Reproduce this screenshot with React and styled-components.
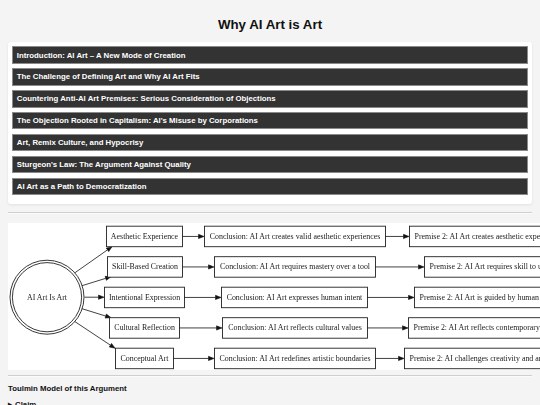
import React from "react";
import styled, { createGlobalStyle } from "styled-components";

const GlobalStyle = createGlobalStyle`
	html, body {
		margin: 0;
		padding: 0;
		overflow: hidden;
		background: #f4f4f4;
		font-family: "Liberation Sans", Arial, sans-serif;
		color: #111;
	}
`;

const Page = styled.div`
	padding: 17px 8px 0;
	width: 524px;
`;

const Title = styled.h1`
	margin: 0 0 9px;
	font-size: 13.3px;
	line-height: 16px;
	font-weight: 700;
	text-align: center;
	color: #111;
`;

const Panel = styled.div`
	background: #fff;
	border-radius: 3px;
	padding: 4.4px 4.4px 4px;
	box-shadow: 0 1px 3px rgba(0, 0, 0, 0.08);
`;

const SectionButton = styled.button`
	display: block;
	box-sizing: border-box;
	width: 100%;
	height: 17.4px;
	margin: 0 0 4.5px;
	padding: 0 3.4px;
	background: #333;
	border: 1px solid #8a8a8a;
	color: #fff;
	font-family: "Liberation Sans", Arial, sans-serif;
	font-weight: 700;
	font-size: 7.8px;
	line-height: 15px;
	text-align: left;
	cursor: pointer;
`;

const Rule = styled.hr`
	margin: ${(props) => props.$top}px 0 ${(props) => props.$bottom}px;
	height: 0;
	border: none;
	border-top: 1px solid #cfcfcf;
	border-bottom: 1px solid #fbfbfb;
`;

const DiagramWrap = styled.div`
	width: 524px;
	height: 147px;
	overflow: visible;
	will-change: transform;
`;

const SubHeading = styled.h3`
	margin: 7px 0 0;
	font-size: 7.8px;
	line-height: 9px;
	font-weight: 700;
`;

const Summary = styled.div`
	margin-top: 7px;
	font-size: 7.8px;
	line-height: 9px;
	font-weight: 700;
	display: flex;
	gap: 3px;
	align-items: center;

	span.marker {
		font-size: 5px;
	}
`;

const sections = [
	"Introduction: AI Art – A New Mode of Creation",
	"The Challenge of Defining Art and Why AI Art Fits",
	"Countering Anti-AI Art Premises: Serious Consideration of Objections",
	"The Objection Rooted in Capitalism: AI's Misuse by Corporations",
	"Art, Remix Culture, and Hypocrisy",
	"Sturgeon's Law: The Argument Against Quality",
	"AI Art as a Path to Democratization",
];

// page coords, the svg group is shifted back by the wrap offset
const rows = [
	{
		y: 236.5,
		a: [106, 182, "Aesthetic Experience"],
		b: [204, 385, "Conclusion: AI Art creates valid aesthetic experiences"],
		c: [409, "Premise 2: AI Art creates aesthetic experiences"],
		from: [75, 273],
		to: [112, 247],
	},
	{
		y: 267,
		a: [107, 182, "Skill-Based Creation"],
		b: [214, 375, "Conclusion: AI Art requires mastery over a tool"],
		c: [424, "Premise 2: AI Art requires skill to use effectively"],
		from: [82, 286],
		to: [111, 277],
	},
	{
		y: 297.5,
		a: [104, 184, "Intentional Expression"],
		b: [221, 367, "Conclusion: AI Art expresses human intent"],
		c: [414, "Premise 2: AI Art is guided by human intent"],
		from: [84.5, 297.5],
		to: [104, 297.5],
	},
	{
		y: 328,
		a: [109, 179, "Cultural Reflection"],
		b: [222, 367, "Conclusion: AI Art reflects cultural values"],
		c: [408, "Premise 2: AI Art reflects contemporary culture"],
		from: [82, 309],
		to: [111, 318],
	},
	{
		y: 358.5,
		a: [115, 173, "Conceptual Art"],
		b: [214, 375, "Conclusion: AI Art redefines artistic boundaries"],
		c: [404, "Premise 2: AI challenges creativity and artistic norms"],
		from: [75, 322],
		to: [115, 348.5],
	},
];

const Arrow = ({ from, to }) => {
	const [x1, y1] = from;
	const [x2, y2] = to;
	const dx = x2 - x1;
	const dy = y2 - y1;
	const len = Math.sqrt(dx * dx + dy * dy);
	const ux = dx / len;
	const uy = dy / len;
	const bx = x2 - ux * 5.5;
	const by = y2 - uy * 5.5;
	const px = -uy * 2.1;
	const py = ux * 2.1;
	return (
		<g>
			<line x1={x1} y1={y1} x2={bx} y2={by} stroke="#111" strokeWidth="0.8" />
			<polygon
				points={`${x2},${y2} ${bx + px},${by + py} ${bx - px},${by - py}`}
				fill="#111"
				stroke="#111"
				strokeWidth="0.6"
			/>
		</g>
	);
};

const Box = ({ x1, x2, y, label, start }) => (
	<g>
		<rect
			x={x1 + 0.5}
			y={y - 10}
			width={x2 - x1}
			height={20.5}
			fill="#fff"
			stroke="#222"
			strokeWidth="0.9"
		/>
		<text
			x={start ? x1 + 5.5 : (x1 + x2) / 2 + 0.5}
			y={y + 2.8}
			textAnchor={start ? "start" : "middle"}
			fontFamily="'Liberation Serif', 'Times New Roman', serif"
			fontSize="7.9"
			fill="#1a1a1a"
		>
			{label}
		</text>
	</g>
);

const ArgumentMap = () => (
	<svg width="620" height="147" viewBox="0 0 620 147">
		<rect x="0" y="0" width="620" height="147" fill="#fff" />
		<g transform="translate(-8,-223.3)">
			<circle cx="47" cy="297.5" r="37" fill="none" stroke="#222" strokeWidth="0.9" />
			<circle cx="47" cy="297.5" r="34.6" fill="none" stroke="#222" strokeWidth="0.9" />
			<text
				x="47"
				y="300.3"
				textAnchor="middle"
				fontFamily="'Liberation Serif', 'Times New Roman', serif"
				fontSize="7.9"
				fill="#1a1a1a"
			>
				AI Art Is Art
			</text>
			{rows.map((r) => (
				<g key={r.a[2]}>
					<Arrow from={r.from} to={r.to} />
					<Box x1={r.a[0]} x2={r.a[1]} y={r.y} label={r.a[2]} />
					<Arrow from={[r.a[1] + 0.5, r.y + 0.25]} to={[r.b[0], r.y + 0.25]} />
					<Box x1={r.b[0]} x2={r.b[1]} y={r.y} label={r.b[2]} />
					<Arrow from={[r.b[1] + 0.5, r.y + 0.25]} to={[r.c[0], r.y + 0.25]} />
					<Box x1={r.c[0]} x2={700} y={r.y} label={r.c[1]} start />
				</g>
			))}
		</g>
	</svg>
);

const App = () => {
	return (
		<Page>
			<GlobalStyle />
			<Title>Why AI Art is Art</Title>
			<Panel>
				{sections.map((s) => (
					<SectionButton key={s}>{s}</SectionButton>
				))}
			</Panel>
			<Rule $top={8} $bottom={9} />
			<DiagramWrap>
				<ArgumentMap />
			</DiagramWrap>
			<Rule $top={5.4} $bottom={0} />
			<SubHeading>Toulmin Model of this Argument</SubHeading>
			<Summary>
				<span className="marker">▶</span>
				<span>Claim</span>
			</Summary>
		</Page>
	);
};

export default App;
